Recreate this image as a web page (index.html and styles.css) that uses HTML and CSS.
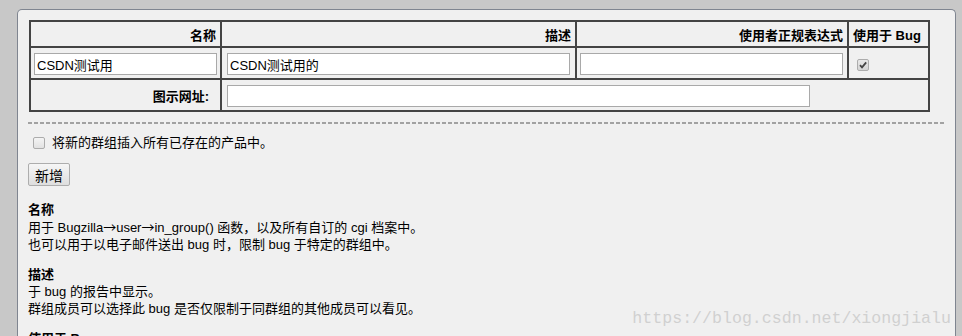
FILE: index.html
```html
<!DOCTYPE html>
<html lang="zh-CN">
  <head>
    <meta charset="UTF-8" />
    <meta name="viewport" content="width=device-width, initial-scale=1.0" />
    <title>新增群组</title>
    <link rel="stylesheet" href="styles.css">
  </head>
  <body>
    <div class="panel">
      <table class="grp">
        <tr class="head">
          <th class="c1">名称</th>
          <th class="c2">描述</th>
          <th class="c3">使用者正规表达式</th>
          <th class="c4">使用于 Bug</th>
        </tr>
        <tr class="fields">
          <td class="c1"><input type="text" class="txt w1" value="CSDN测试用"></td>
          <td class="c2"><input type="text" class="txt w2" value="CSDN测试用的"></td>
          <td class="c3"><input type="text" class="txt w3" value=""></td>
          <td class="c4">
            <span class="box on">
              <svg width="10" height="10" viewBox="0 0 10 10"><path d="M2 5.2 L4 7.3 L8.2 2.4" fill="none" stroke="#444" stroke-width="1.8"/></svg>
            </span>
          </td>
        </tr>
        <tr class="icon">
          <td class="lbl">图示网址:</td>
          <td colspan="3" class="c2"><input type="text" class="txt w4" value=""></td>
        </tr>
      </table>

      <hr class="sep">

      <div class="opt">
        <span class="box"></span>
        <span>将新的群组插入所有已存在的产品中。</span>
      </div>

      <button class="btn">新增</button>

      <dl class="help">
        <dt>名称</dt>
        <dd>用于 Bugzilla<span class="arr">→</span>user<span class="arr">→</span>in_group() 函数，以及所有自订的 cgi 档案中。<br>也可以用于以电子邮件送出 bug 时，限制 bug 于特定的群组中。</dd>
        <dt>描述</dt>
        <dd>于 bug 的报告中显示。<br>群组成员可以选择此 bug 是否仅限制于同群组的其他成员可以看见。</dd>
        <dt>使用于 Bug</dt>
      </dl>

      <div class="mark">https://blog.csdn.net/xiongjialu</div>
    </div>
  </body>
</html>
```

FILE: styles.css
```css
body {
  margin: 0;
  height: 336px;
  overflow: hidden;
  background: #c8c8c8;
  font-family: "Liberation Sans", "Noto Sans CJK SC", sans-serif;
  font-size: 13px;
  color: #000;
}
.panel {
  position: relative;
  box-sizing: border-box;
  width: 939px;
  height: 327px;
  margin: 9px 0 0 17px;
  padding: 10px 10px 0 10px;
  background: #f0f0f0;
  border: 1px solid #7f8590;
  border-bottom: 0;
  border-radius: 5px 5px 0 0;
  overflow: hidden;
}

/* table */
.grp {
  table-layout: fixed;
  width: 901px;
  margin-left: 1px;
  border-spacing: 0;
  border-left: 2px solid #444;
  border-top: 2px solid #444;
}
.grp th,
.grp td {
  box-sizing: border-box;
  padding: 0;
  border-right: 2px solid #444;
  border-bottom: 2px solid #444;
}
.grp th {
  height: 26px;
  text-align: right;
  padding-right: 4px;
  font-weight: bold;
  vertical-align: middle;
}
.grp th.c1 { width: 191px; }
.grp th.c2 { width: 355px; }
.grp th.c3 { width: 272px; }
.grp th.c4 { width: 81px; text-align: left; padding: 0 0 0 4px; }

.grp td {
  height: 32px;
  vertical-align: top;
  padding-top: 5px;
}
.grp td.c1 { padding-left: 3px; }
.grp td.c2 { padding-left: 5px; }
.grp td.c3 { padding-left: 3px; }
.grp td.c4 { padding: 10px 0 0 8px; }
.grp td.lbl {
  text-align: right;
  padding: 0 11px 0 0;
  vertical-align: middle;
  font-weight: bold;
}

.txt {
  display: block;
  box-sizing: border-box;
  height: 22px;
  margin: 0;
  padding: 0 2px;
  border: 1px solid #a9a9a9;
  background: #fff;
  font-family: "Liberation Sans", "Noto Sans CJK SC", sans-serif;
  font-size: 13px;
  color: #000;
  outline: none;
}
.w1 { width: 183px; }
.w2 { width: 343px; }
.w3 { width: 263px; }
.w4 { width: 583px; }

/* checkbox look */
.box {
  display: inline-flex;
  align-items: center;
  justify-content: center;
  box-sizing: border-box;
  width: 12px;
  height: 12px;
  border: 1px solid #acacac;
  border-radius: 2px;
  background: linear-gradient(#f4f4f4, #e2e2e2);
}
.box svg { display: block; }
.box.on { background: linear-gradient(#e8e8e8, #d4d4d4); }

.sep {
  height: 2px;
  margin: 10px 0 0 0;
  border: 0;
  background: repeating-linear-gradient(90deg, #a2a2a2 0 4px, transparent 4px 6px);
}

.opt {
  display: flex;
  align-items: center;
  margin-top: 10px;
  padding-left: 5px;
  line-height: 17px;
}
.opt .box { margin-right: 7px; }

.btn {
  display: block;
  box-sizing: border-box;
  width: 42px;
  height: 23px;
  margin-top: 12px;
  padding: 0;
  border: 1px solid #adadad;
  border-radius: 2px;
  background: linear-gradient(#f6f6f6, #dedede);
  font-family: "Liberation Sans", "Noto Sans CJK SC", sans-serif;
  font-size: 14px;
  color: #000;
}

.help {
  margin: 15px 0 0 0;
  line-height: 17px;
}
.help dt { font-weight: bold; }
.help dd { margin: 0 0 13px 0; }
.arr { font-family: "Noto Sans CJK SC", sans-serif; }

.mark {
  position: absolute;
  top: 299px;
  right: 4px;
  font-family: "Liberation Mono", monospace;
  font-size: 16.6px;
  line-height: 20px;
  color: #d0d0d0;
}
```
